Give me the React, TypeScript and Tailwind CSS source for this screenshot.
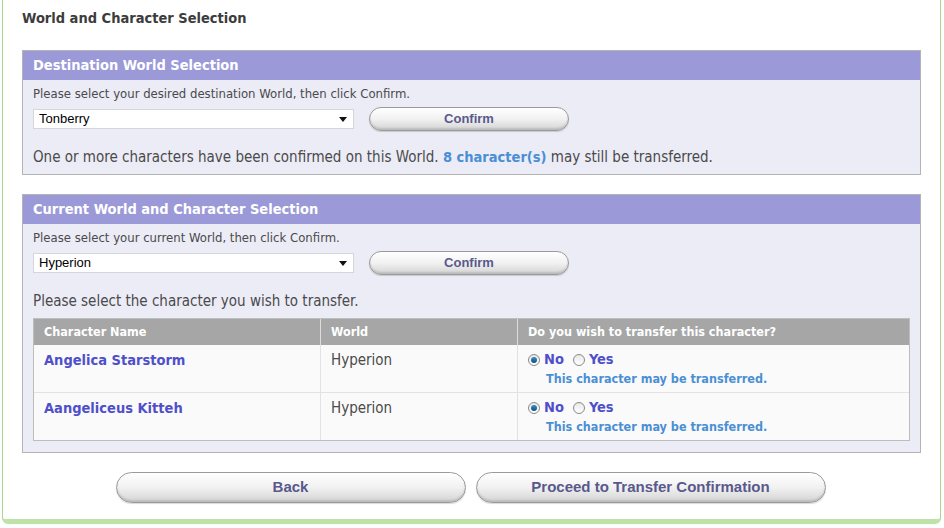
import React from 'react';

const font = { fontFamily: '"DejaVu Sans Condensed", "Liberation Sans", sans-serif' };

// pill button with the grey glossy gradient
const PillButton = ({ label, className = '' }: { label: string; className?: string }) => (
  <button
    className={`rounded-full border border-[#9a9a9a] bg-gradient-to-b from-[#ffffff] via-[#f1f1f1] to-[#d4d4d4] shadow-[inset_0_-2px_2px_rgba(0,0,0,0.12),0_1px_1px_rgba(0,0,0,0.15)] font-bold text-[#59598c] ${className}`}
    style={{ fontFamily: '"Liberation Sans", sans-serif' }}
  >
    {label}
  </button>
);

const WorldSelect = ({ value }: { value: string }) => (
  <div className="flex h-[20px] w-[321px] items-center justify-between border border-[#d5d5de] bg-white pl-[5px] pr-[6px] text-[13px] text-black" style={{ fontFamily: '"Liberation Sans", sans-serif' }}>
    <span>{value}</span>
    <svg width="8" height="5" viewBox="0 0 8 5">
      <path d="M0 0h8L4 5z" fill="#111" />
    </svg>
  </div>
);

const Radio = ({ checked }: { checked: boolean }) => (
  <span className="flex h-[12px] w-[12px] items-center justify-center rounded-full border border-[#8a8a8a] bg-gradient-to-b from-[#e8e8e8] to-[#ffffff]">
    {checked && <span className="h-[6px] w-[6px] rounded-full bg-gradient-to-b from-[#3f8ec4] to-[#0f4f7c]" />}
  </span>
);

const Panel = ({ title, children }: { title: string; children: React.ReactNode }) => (
  <div className="border border-[#b4b4b4] bg-[#ececf7]">
    <div className="flex h-[29px] items-center bg-[#9b99d7] px-[10px] text-[14.5px] font-bold text-white">{title}</div>
    <div className="px-[10px]">{children}</div>
  </div>
);

const characters = [
  { name: 'Angelica Starstorm', world: 'Hyperion' },
  { name: 'Aangeliceus Kitteh', world: 'Hyperion' },
];

export default function App() {
  return (
    <div className="h-[528px] w-[944px] overflow-hidden bg-white" style={font}>
      <div className="ml-[2px] h-[524px] w-[939px] rounded-b-[6px] border-x border-b-[5px] border-x-[#a9d98f] border-b-[#bde3a9] bg-white px-[19px]">
        <div className="pt-[9px] text-[14.5px] font-bold leading-[18px] text-[#3c3c3c]">World and Character Selection</div>

        <div className="mt-[23px]">
          <Panel title="Destination World Selection">
            <div className="pt-[6px] text-[13px] leading-[16px] text-[#4a4a4a]">Please select your desired destination World, then click Confirm.</div>
            <div className="mt-[5px] flex items-center gap-[15px]">
              <WorldSelect value="Tonberry" />
              <PillButton label="Confirm" className="h-[24px] w-[200px] text-[13px]" />
            </div>
            <div className="pb-[7px] pt-[16px] text-[15px] leading-[20px] text-[#4a4a4a]">
              One or more characters have been confirmed on this World.{' '}
              <span className="text-[14.5px] font-bold text-[#4a8fd4]">8 character(s)</span> may still be transferred.
            </div>
          </Panel>
        </div>

        <div className="mt-[19px]">
          <Panel title="Current World and Character Selection">
            <div className="pt-[6px] text-[13px] leading-[16px] text-[#4a4a4a]">Please select your current World, then click Confirm.</div>
            <div className="mt-[5px] flex items-center gap-[15px]">
              <WorldSelect value="Hyperion" />
              <PillButton label="Confirm" className="h-[24px] w-[200px] text-[13px]" />
            </div>
            <div className="pt-[16px] text-[15px] leading-[20px] text-[#4a4a4a]">Please select the character you wish to transfer.</div>
            <div className="mb-[11px] mt-[7px] border border-[#bdbdbd] bg-[#fafafa]">
              <div className="grid h-[26px] grid-cols-[286px_197px_1fr] bg-[#a6a6a6] text-[12.5px] font-bold text-white">
                <div className="flex items-center px-[10px]">Character Name</div>
                <div className="flex items-center border-l border-[#dcdcdc] px-[10px]">World</div>
                <div className="flex items-center border-l border-[#dcdcdc] px-[10px]">Do you wish to transfer this character?</div>
              </div>
              {characters.map((c, i) => (
                <div key={c.name} className={`grid grid-cols-[286px_197px_1fr] ${i > 0 ? 'h-[48px] border-t border-[#e2e2e2]' : 'h-[47px]'}`}>
                  <div className="px-[10px] pt-[5px] text-[14.5px] font-bold leading-[20px] text-[#4f4fca]">{c.name}</div>
                  <div className="border-l border-[#e2e2e2] px-[10px] pt-[5px] text-[15px] leading-[20px] text-[#4a4a4a]">{c.world}</div>
                  <div className="border-l border-[#e2e2e2] px-[10px] pt-[5px]">
                    <div className="flex h-[20px] items-center text-[14.5px] font-bold text-[#4f4fca]">
                      <Radio checked />
                      <span className="ml-[4px]">No</span>
                      <span className="ml-[9px]"><Radio checked={false} /></span>
                      <span className="ml-[4px]">Yes</span>
                    </div>
                    <div className="pl-[18px] text-[12.5px] font-bold leading-[18px] text-[#4a8fd4]">This character may be transferred.</div>
                  </div>
                </div>
              ))}
            </div>
          </Panel>
        </div>

        <div className="mt-[19px] flex justify-center gap-[10px] pr-[2px]">
          <PillButton label="Back" className="h-[31px] w-[350px] text-[15px]" />
          <PillButton label="Proceed to Transfer Confirmation" className="h-[31px] w-[350px] text-[15px]" />
        </div>
      </div>
    </div>
  );
}
